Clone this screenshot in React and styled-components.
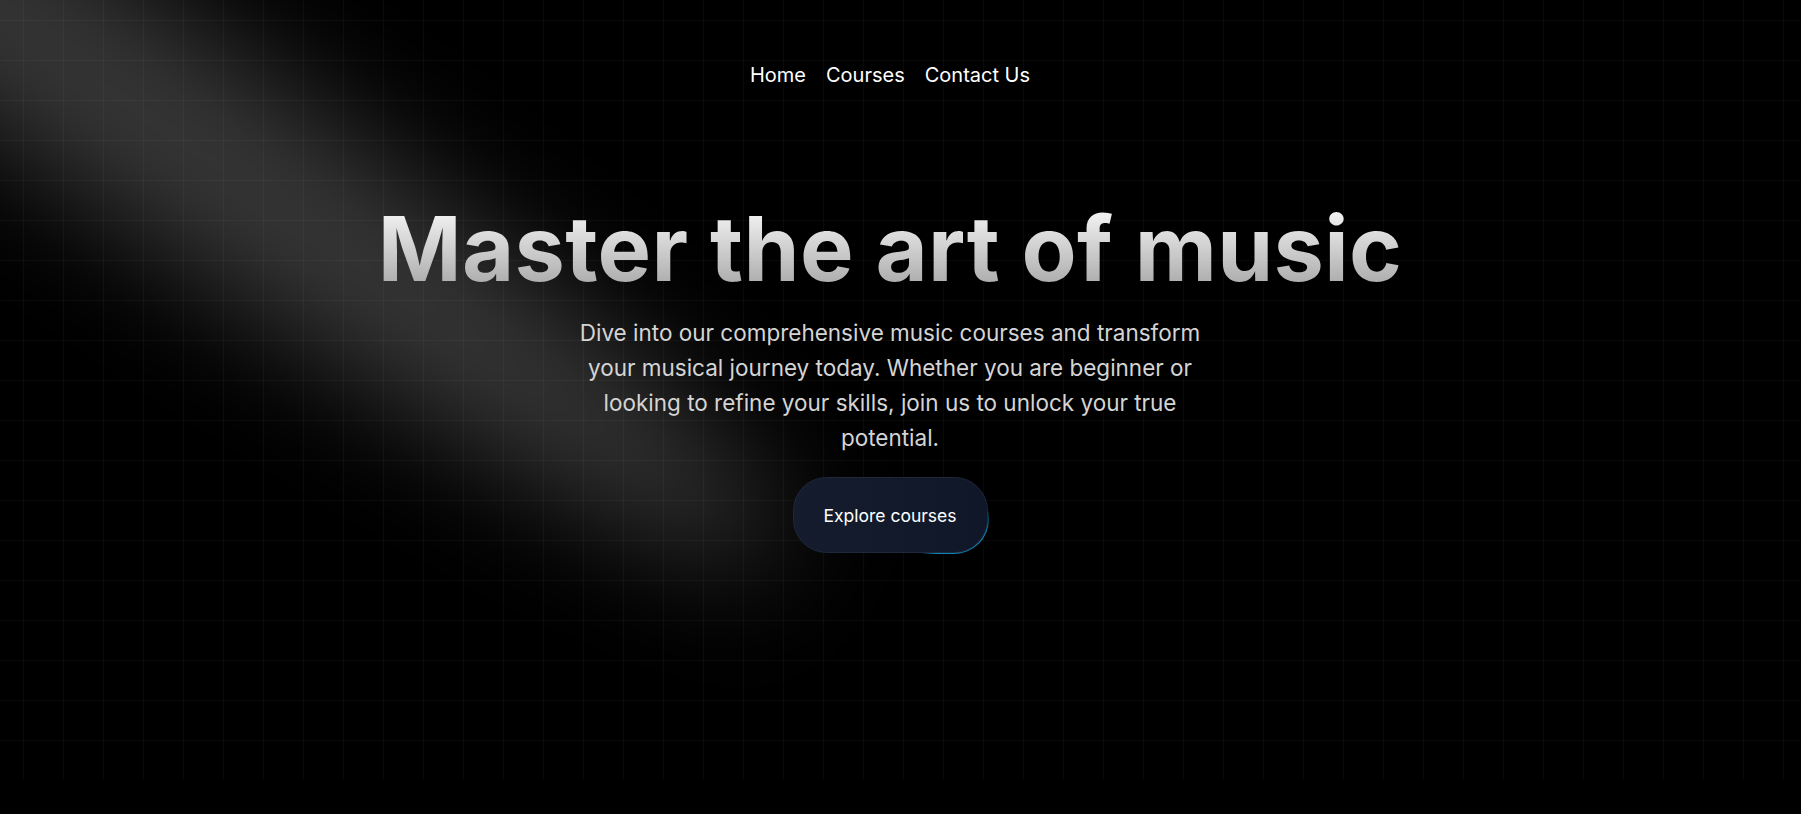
import React from "react";
import styled, { createGlobalStyle } from "styled-components";

const GlobalStyle = createGlobalStyle`
  html, body {
    margin: 0;
    padding: 0;
    background: #000;
    font-family: "Inter", "Noto Sans", sans-serif;
    -webkit-font-smoothing: antialiased;
  }
`;

const Hero = styled.section`
  position: relative;
  height: 780px;
  overflow: hidden;
  background-color: #000;
  background-image:
    linear-gradient(to bottom, rgba(255, 255, 255, 0.035) 1px, transparent 1px),
    linear-gradient(to right, rgba(255, 255, 255, 0.035) 1px, transparent 1px);
  background-size: 40px 40px;
  background-position: 23px 20px;
`;

const Beam = styled.svg`
  position: absolute;
  inset: 0;
  width: 100%;
  height: 100%;
  pointer-events: none;
  z-index: 1;
`;

const Content = styled.div`
  position: relative;
  z-index: 2;
  display: flex;
  flex-direction: column;
  align-items: center;
  padding-right: 21px;
`;

const Nav = styled.nav`
  display: flex;
  gap: 20px;
  padding-top: 60px;
`;

const NavLink = styled.a`
  color: #fff;
  font-size: 20px;
  line-height: 30px;
  text-decoration: none;
  cursor: pointer;
`;

const Title = styled.h1`
  margin: 114px 0 0;
  font-size: 90px;
  line-height: 90px;
  font-weight: 700;
  letter-spacing: 0.3px;
  text-align: center;
  background: linear-gradient(to bottom, #fafafa, #a3a3a3);
  -webkit-background-clip: text;
  background-clip: text;
  color: transparent;
`;

const Lead = styled.p`
  margin: 21px 0 0;
  max-width: 640px;
  font-size: 22.5px;
  line-height: 35px;
  color: #d4d4d4;
  text-align: center;
`;

const ButtonShell = styled.div`
  position: relative;
  margin-top: 21px;
  width: 197px;
  height: 78px;
  padding: 1px;
  box-sizing: border-box;
  border-radius: 35px;
  overflow: hidden;
`;

const Glow = styled.div`
  position: absolute;
  left: 120px;
  top: 16px;
  width: 100px;
  height: 100px;
  opacity: 0.8;
  background: radial-gradient(#0ea5e9 40%, transparent 60%);
`;

const ButtonFace = styled.button`
  position: relative;
  width: 100%;
  height: 100%;
  box-sizing: border-box;
  border: 1px solid #1e293b;
  border-radius: 33.6px;
  background: linear-gradient(to right, #141c2e, #0f1729);
  color: #fff;
  font-family: inherit;
  font-size: 17.5px;
  display: flex;
  align-items: center;
  justify-content: center;
  cursor: pointer;
`;

export default function App() {
  return (
    <>
      <GlobalStyle />
      <Hero>
        <Beam viewBox="0 0 1801 780" preserveAspectRatio="none">
          <defs>
            <filter
              id="beamBlur"
              filterUnits="userSpaceOnUse"
              x="-1200"
              y="-1200"
              width="4200"
              height="4200"
            >
              <feGaussianBlur stdDeviation="60" />
            </filter>
          </defs>
          <ellipse
            cx="160"
            cy="125"
            rx="760"
            ry="105"
            fill="#fff"
            fillOpacity="0.21"
            transform="rotate(34.7 160 125)"
            filter="url(#beamBlur)"
          />
        </Beam>
        <Content>
          <Nav>
            <NavLink>Home</NavLink>
            <NavLink>Courses</NavLink>
            <NavLink>Contact Us</NavLink>
          </Nav>
          <Title>Master the art of music</Title>
          <Lead>
            Dive into our comprehensive music courses and transform your
            musical journey today. Whether you are beginner or looking to
            refine your skills, join us to unlock your true potential.
          </Lead>
          <ButtonShell>
            <Glow />
            <ButtonFace>Explore courses</ButtonFace>
          </ButtonShell>
        </Content>
      </Hero>
    </>
  );
}
